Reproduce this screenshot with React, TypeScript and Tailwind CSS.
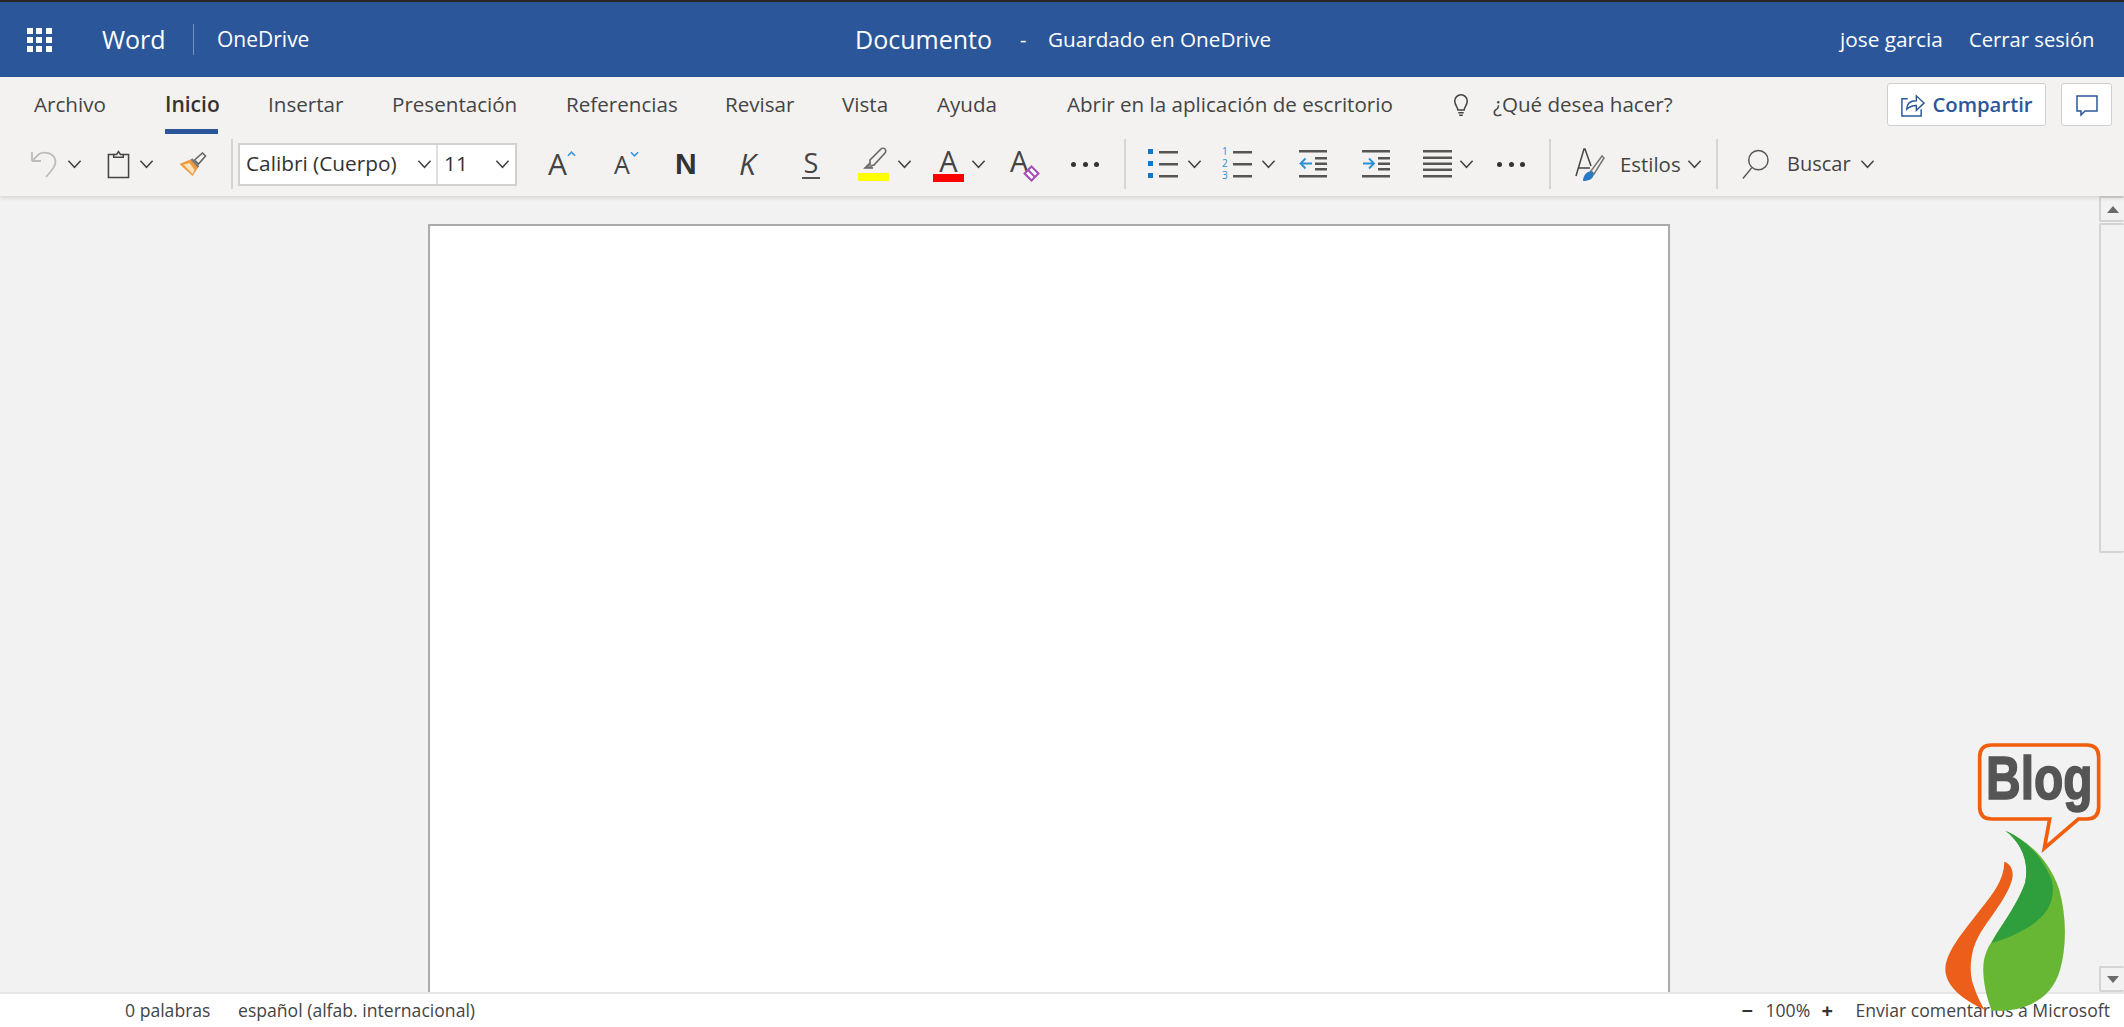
// Word Online: documento en blanco con cinta de Inicio

const FONT = "font-['Open_Sans','Noto_Sans',sans-serif]";

function Chevron({ className = "" }: { className?: string }) {
  return (
    <svg viewBox="0 0 16 10" className={`h-[10px] w-[15px] shrink-0 ${className}`} fill="none" stroke="#444" strokeWidth="1.6">
      <path d="M1.500 1.500 8 8.500l6.500-7" />
    </svg>
  );
}

function Separator({ className = "" }: { className?: string }) {
  return <div className={`h-[50px] w-[2px] shrink-0 bg-[#d6d5d4] ${className}`} />;
}

function Dots({ className = "" }: { className?: string }) {
  return (
    <div className={`flex w-[28px] shrink-0 justify-between ${className}`}>
      <span className="h-[5px] w-[5px] rounded-full bg-[#333]" />
      <span className="h-[5px] w-[5px] rounded-full bg-[#333]" />
      <span className="h-[5px] w-[5px] rounded-full bg-[#333]" />
    </div>
  );
}

function Lines({ blue }: { blue: "bullets" | "numbers" }) {
  return (
    <svg viewBox="0 0 30 34" className="h-[34px] w-[30px] shrink-0">
      {[5, 17, 29].map((y, i) => (
        <g key={y}>
          {blue === "bullets" ? (
            <rect x="0" y={y - 3} width="5" height="5" fill="#0f78c9" />
          ) : (
            <text x="0" y={y + 3} fontSize="10" fill="#2b8fd6" fontFamily="Open Sans">{i + 1}</text>
          )}
          <rect x="11" y={y - 1} width="19" height="2.500" fill="#555" />
        </g>
      ))}
    </svg>
  );
}

function Indent({ dir }: { dir: "in" | "out" }) {
  return (
    <svg viewBox="0 0 28 28" className="h-[28px] w-[28px] shrink-0">
      <rect x="0" y="0" width="28" height="2.500" fill="#555" />
      <rect x="0" y="25" width="28" height="2.500" fill="#555" />
      <rect x="16" y="7" width="12" height="2.500" fill="#555" />
      <rect x="16" y="12.500" width="12" height="2.500" fill="#555" />
      <rect x="16" y="18" width="12" height="2.500" fill="#555" />
      {dir === "out" ? (
        <path d="M13 13.500H2M6.500 8.500l-5 5 5 5" fill="none" stroke="#2b8fd6" strokeWidth="1.800" />
      ) : (
        <path d="M1 13.500h11M7 8.500l5 5-5 5" fill="none" stroke="#2b8fd6" strokeWidth="1.800" />
      )}
    </svg>
  );
}

function Ribbon() {
  return (
    <div className="relative z-10 h-[119px] shrink-0 bg-[#f3f2f1] shadow-[0_2px_4px_rgba(0,0,0,0.12)]">
      {/* Tabs */}
      <div className="flex h-[57px] items-start pl-[34px] text-[20.6px] text-[#444]">
        <span className="mt-[12px] w-[131px]">Archivo</span>
        <div className="flex w-[103px] flex-col">
          <span className="mt-[12px] w-[53px] text-[21px] font-semibold text-[#333]">Inicio</span>
          <span className="mt-[8px] h-[5px] w-[53px] bg-[#2b579a]" />
        </div>
        <span className="mt-[12px] w-[124px]">Insertar</span>
        <span className="mt-[12px] w-[174px]">Presentación</span>
        <span className="mt-[12px] w-[159px]">Referencias</span>
        <span className="mt-[12px] w-[117px]">Revisar</span>
        <span className="mt-[12px] w-[95px]">Vista</span>
        <span className="mt-[12px] w-[130px]">Ayuda</span>
        <span className="mt-[12px] w-[384px] whitespace-nowrap">Abrir en la aplicación de escritorio</span>
        <svg viewBox="0 0 20 28" className="mt-[16px] h-[25px] w-[20px] shrink-0" fill="none" stroke="#444" strokeWidth="1.700">
          <path d="M6.500 19c0-3-3.500-5-3.500-10a7 7 0 0 1 14 0c0 5-3.500 7-3.500 10z" />
          <path d="M7 22h6M8 25h4" />
        </svg>
        <span className="ml-[22px] mt-[12px] w-[394px]">¿Qué desea hacer?</span>
        <button className="mt-[6px] flex h-[43px] w-[159px] shrink-0 items-center justify-center gap-[7px] rounded-[3px] border border-[#d0cfce] bg-white text-[20.3px] font-semibold text-[#2b579a]">
          <svg viewBox="0 0 26 28" className="h-[27px] w-[25px]" fill="none" stroke="#2b579a" strokeWidth="1.500">
            <path d="M8 8H2v18h20v-7" />
            <path d="M7 19c0-6 4-9 10-9V5l8 7.500-8 7.500v-5c-4 0-7 1-10 4z" />
          </svg>
          Compartir
        </button>
        <button className="ml-[15px] mt-[6px] flex h-[43px] w-[51px] shrink-0 items-center justify-center rounded-[3px] border border-[#d0cfce] bg-white">
          <svg viewBox="0 0 24 24" className="h-[24px] w-[24px]" fill="none" stroke="#2b579a" strokeWidth="1.500">
            <path d="M2 3h20v15H10l-4 4v-4H2z" />
          </svg>
        </button>
      </div>
      {/* Toolbar */}
      <div className="flex h-[62px] items-center pb-[2px] pl-[31px] text-[#444]">
        <svg viewBox="0 0 26 28" className="h-[28px] w-[26px] shrink-0" fill="none" stroke="#bdbcbb" strokeWidth="1.800">
          <path d="M1 11h9M1 11V2M1 11 8 4c5-3 14-1 16 5s-3 11-9 18" />
        </svg>
        <Chevron className="ml-[10px]" />
        <svg viewBox="0 0 24 29" className="ml-[25px] h-[29px] w-[23px] shrink-0" fill="none" stroke="#444" strokeWidth="1.600">
          <path d="M7 4H1.500v24h21V4H17" />
          <path d="M7 7V4h3l2-3 2 3h3v3z" fill="#f3f2f1" />
        </svg>
        <Chevron className="ml-[9px]" />
        <svg viewBox="0 0 28 24" className="ml-[24px] h-[24px] w-[29px] shrink-0">
          <path d="M1 12 13 7l7 8-6 9z" fill="#ef9a3d" />
          <path d="M5 12.500 14 22l2-4-5-7z" fill="#fbe3c4" />
          <path d="m16 8 8-7 3 3-7 8z" fill="none" stroke="#666" strokeWidth="1.600" />
          <path d="m13 7 7 8" stroke="#777" strokeWidth="2" />
        </svg>
        <Separator className="ml-[24px]" />
        <div className="ml-[5px] flex h-[43px] w-[279px] shrink-0 border-2 border-[#d2d1d0] bg-white text-[20.8px] text-[#333]">
          <div className="flex w-[198px] items-center justify-between border-r-2 border-[#e1e0df] pl-[6px] pr-[4px]">
            <span className="whitespace-nowrap">Calibri (Cuerpo)</span>
            <Chevron />
          </div>
          <div className="flex flex-1 items-center justify-between pl-[6px] pr-[5px]">
            <span>11</span>
            <Chevron />
          </div>
        </div>
        <span className="relative ml-[31px] w-[27px] text-[30px] leading-none text-[#444]">
          A
          <svg viewBox="0 0 10 6" className="absolute left-[19px] top-[2px] h-[6px] w-[9px]" fill="none" stroke="#3a96dd" strokeWidth="1.800">
            <path d="m1 5 4-4 4 4" />
          </svg>
        </span>
        <span className="relative ml-[39px] w-[24px] text-[25px] leading-none text-[#444]">
          A
          <svg viewBox="0 0 10 6" className="absolute left-[16px] top-[-1px] h-[6px] w-[9px]" fill="none" stroke="#3a96dd" strokeWidth="1.800">
            <path d="m1 1 4 4 4-4" />
          </svg>
        </span>
        <span className="ml-[37px] w-[21px] font-['Liberation_Sans'] text-[30px] font-bold leading-none text-[#333]">N</span>
        <span className="ml-[43px] w-[18px] text-[30px] italic leading-none text-[#444]">K</span>
        <span className="ml-[45px] w-[18px] border-b-2 border-[#555] pb-[1px] text-center text-[27px] leading-[27px] text-[#444]">S</span>
        <div className="ml-[38px] flex w-[31px] shrink-0 flex-col items-center gap-[2px]">
          <svg viewBox="0 0 26 24" className="h-[24px] w-[26px]" fill="none" stroke="#666" strokeWidth="1.600">
            <path d="M9 13 20 2c1-1 3-1 4 0s1 3 0 4L13 18l-4 1z" />
            <path d="m9 16-5 5h8" fill="#888" />
          </svg>
          <span className="h-[8px] w-[31px] bg-[#ffff00]" />
        </div>
        <Chevron className="ml-[8px]" />
        <div className="ml-[21px] flex w-[31px] shrink-0 flex-col items-center">
          <span className="text-[29px] leading-[27px] text-[#444]">A</span>
          <span className="h-[8px] w-[31px] bg-[#ff0000]" />
        </div>
        <Chevron className="ml-[7px]" />
        <div className="relative ml-[24px] h-[36px] w-[30px] shrink-0">
          <span className="text-[29px] leading-[30px] text-[#444]">A</span>
          <svg viewBox="0 0 16 16" className="absolute left-[13px] top-[19px] h-[17px] w-[17px]" fill="#fff" stroke="#a64fb5" strokeWidth="2">
            <path d="M8 1.500 14.500 8 8 14.500 1.500 8z" />
            <path d="M5 5l6 6" />
          </svg>
        </div>
        <Dots className="ml-[31px]" />
        <Separator className="ml-[25px]" />
        <div className="ml-[22px]"><Lines blue="bullets" /></div>
        <Chevron className="ml-[9px]" />
        <div className="ml-[20px]"><Lines blue="numbers" /></div>
        <Chevron className="ml-[9px]" />
        <div className="ml-[23px]"><Indent dir="out" /></div>
        <div className="ml-[35px]"><Indent dir="in" /></div>
        <svg viewBox="0 0 29 28" className="ml-[33px] h-[28px] w-[29px] shrink-0">
          {[0, 6.500, 12.500, 18.500, 25].map((y) => (
            <rect key={y} x="0" y={y} width="29" height="2.500" fill="#555" />
          ))}
        </svg>
        <Chevron className="ml-[7px]" />
        <Dots className="ml-[23px]" />
        <Separator className="ml-[24px]" />
        <svg viewBox="0 0 30 34" className="ml-[24px] h-[34px] w-[30px] shrink-0" fill="none">
          <path d="M1 29 9 2h1l6 17M4 21h11" stroke="#444" strokeWidth="1.500" />
          <path d="m16 24 11-15 2 2-10 16z" stroke="#777" strokeWidth="1.500" />
          <path d="M8 34c0-5 3-9 8-10l3 3c-1 5-5 7-11 7z" fill="#2b79c2" />
        </svg>
        <span className="ml-[15px] w-[59px] text-[20.4px] text-[#444]">Estilos</span>
        <Chevron className="ml-[8px]" />
        <Separator className="ml-[14px]" />
        <svg viewBox="0 0 28 32" className="ml-[24px] h-[32px] w-[27px] shrink-0" fill="none" stroke="#555" strokeWidth="1.500">
          <circle cx="17" cy="12" r="10" />
          <path d="M10 20 1 31" />
        </svg>
        <span className="ml-[18px] w-[60px] text-[20px] text-[#444]">Buscar</span>
        <Chevron className="ml-[13px]" />
      </div>
    </div>
  );
}

function Scrollbar() {
  return (
    <div className="flex w-[25px] shrink-0 flex-col">
      <div className="flex h-[26px] items-center justify-center rounded-[2px] border-2 border-r-0 border-[#d4d4d4] bg-[#f2f2f2]">
        <span className="h-0 w-0 border-x-[6px] border-b-[7px] border-x-transparent border-b-[#6a6a6a]" />
      </div>
      <div className="mt-[1px] h-[330px] rounded-[2px] border-2 border-r-0 border-[#d4d4d4] bg-[#f2f2f2]" />
      <div className="flex-1" />
      <div className="flex h-[26px] items-center justify-center rounded-[2px] border-2 border-r-0 border-[#d4d4d4] bg-[#f2f2f2]">
        <span className="h-0 w-0 border-x-[6px] border-t-[7px] border-x-transparent border-t-[#6a6a6a]" />
      </div>
    </div>
  );
}

function BlogLogo() {
  return (
    <svg viewBox="0 0 672 921" className="absolute left-[1900px] top-[720px] z-20 h-[307px] w-[224px]">
      <path
        d="M275 75h285q36 0 36 36v150q0 36-36 36h-25L433 385l16-88H275q-36 0-36-36V111q0-36 36-36z"
        fill="none"
        stroke="#f15e0e"
        strokeWidth="11"
      />
      <text x="258" y="238" fontFamily="Liberation Sans" fontWeight="700" fontSize="186" fill="#555" stroke="#555" strokeWidth="5" textLength="320" lengthAdjust="spacingAndGlyphs">
        Blog
      </text>
      <path
        d="M313 425C330 430 342 450 337 475 325 530 270 590 235 650 210 695 205 760 222 800 232 830 245 855 255 870 190 840 135 800 136 745 140 690 195 630 240 570 280 520 312 480 313 425z"
        fill="#ec5f1a"
      />
      <path
        d="M316 332C390 365 450 425 478 510 500 590 500 680 480 750 455 840 370 878 275 872 255 820 245 760 252 720 258 695 265 680 275 665 300 620 350 560 375 490 390 420 360 365 316 332z"
        fill="#67b735"
      />
      <path
        d="M316 332C390 365 430 420 455 480 470 540 440 590 380 625 345 645 310 660 275 668 300 620 350 560 375 490 390 420 360 365 316 332z"
        fill="#2f9e3c"
      />
    </svg>
  );
}

export default function App() {
  return (
    <div className={`relative flex h-[1027px] w-[2124px] flex-col overflow-hidden bg-[#f2f2f2] ${FONT}`}>
      {/* Top bar */}
      <header className="flex h-[77px] shrink-0 items-center border-t-2 border-[#262626] bg-[#2b579a] text-white">
        <div className="ml-[27px] grid w-[25px] grid-cols-3 gap-[3px]">
          {Array.from({ length: 9 }).map((_, i) => (
            <span key={i} className="h-[6px] w-[6px] bg-white" />
          ))}
        </div>
        <span className="ml-[50px] w-[91px] text-[25px]">Word</span>
        <span className="h-[31px] w-px bg-[#6f8fbd]" />
        <span className="ml-[23px] w-[638px] text-[21px]">OneDrive</span>
        <span className="w-[165px] text-[25px]">Documento</span>
        <span className="w-[28px] text-[20px]">-</span>
        <span className="w-[792px] text-[20.7px]">Guardado en OneDrive</span>
        <span className="w-[129px] text-[20.8px]">jose garcia</span>
        <span className="whitespace-nowrap text-[20.2px]">Cerrar sesión</span>
      </header>

      <Ribbon />

      {/* Canvas */}
      <div className="flex min-h-0 flex-1">
        <div className="flex flex-1 justify-center">
          <div className="ml-[-1px] mt-[28px] w-[1242px] border-x-2 border-t-2 border-[#ababab] bg-white" />
        </div>
        <Scrollbar />
      </div>

      {/* Status bar */}
      <footer className="flex h-[35px] shrink-0 items-center border-t-2 border-[#e6e6e6] bg-white text-[17.6px] text-[#444]">
        <span className="ml-[125px] w-[113px]">0 palabras</span>
        <span className="whitespace-nowrap">español (alfab. internacional)</span>
        <span className="ml-auto w-[10px] text-[20px] font-bold leading-none text-[#333]">−</span>
        <span className="ml-[14px] w-[43px]">100%</span>
        <span className="ml-[13px] w-[12px] text-[20px] font-bold leading-none text-[#333]">+</span>
        <span className="ml-[22px] mr-[14px] whitespace-nowrap">Enviar comentarios a Microsoft</span>
      </footer>

      <BlogLogo />
    </div>
  );
}
